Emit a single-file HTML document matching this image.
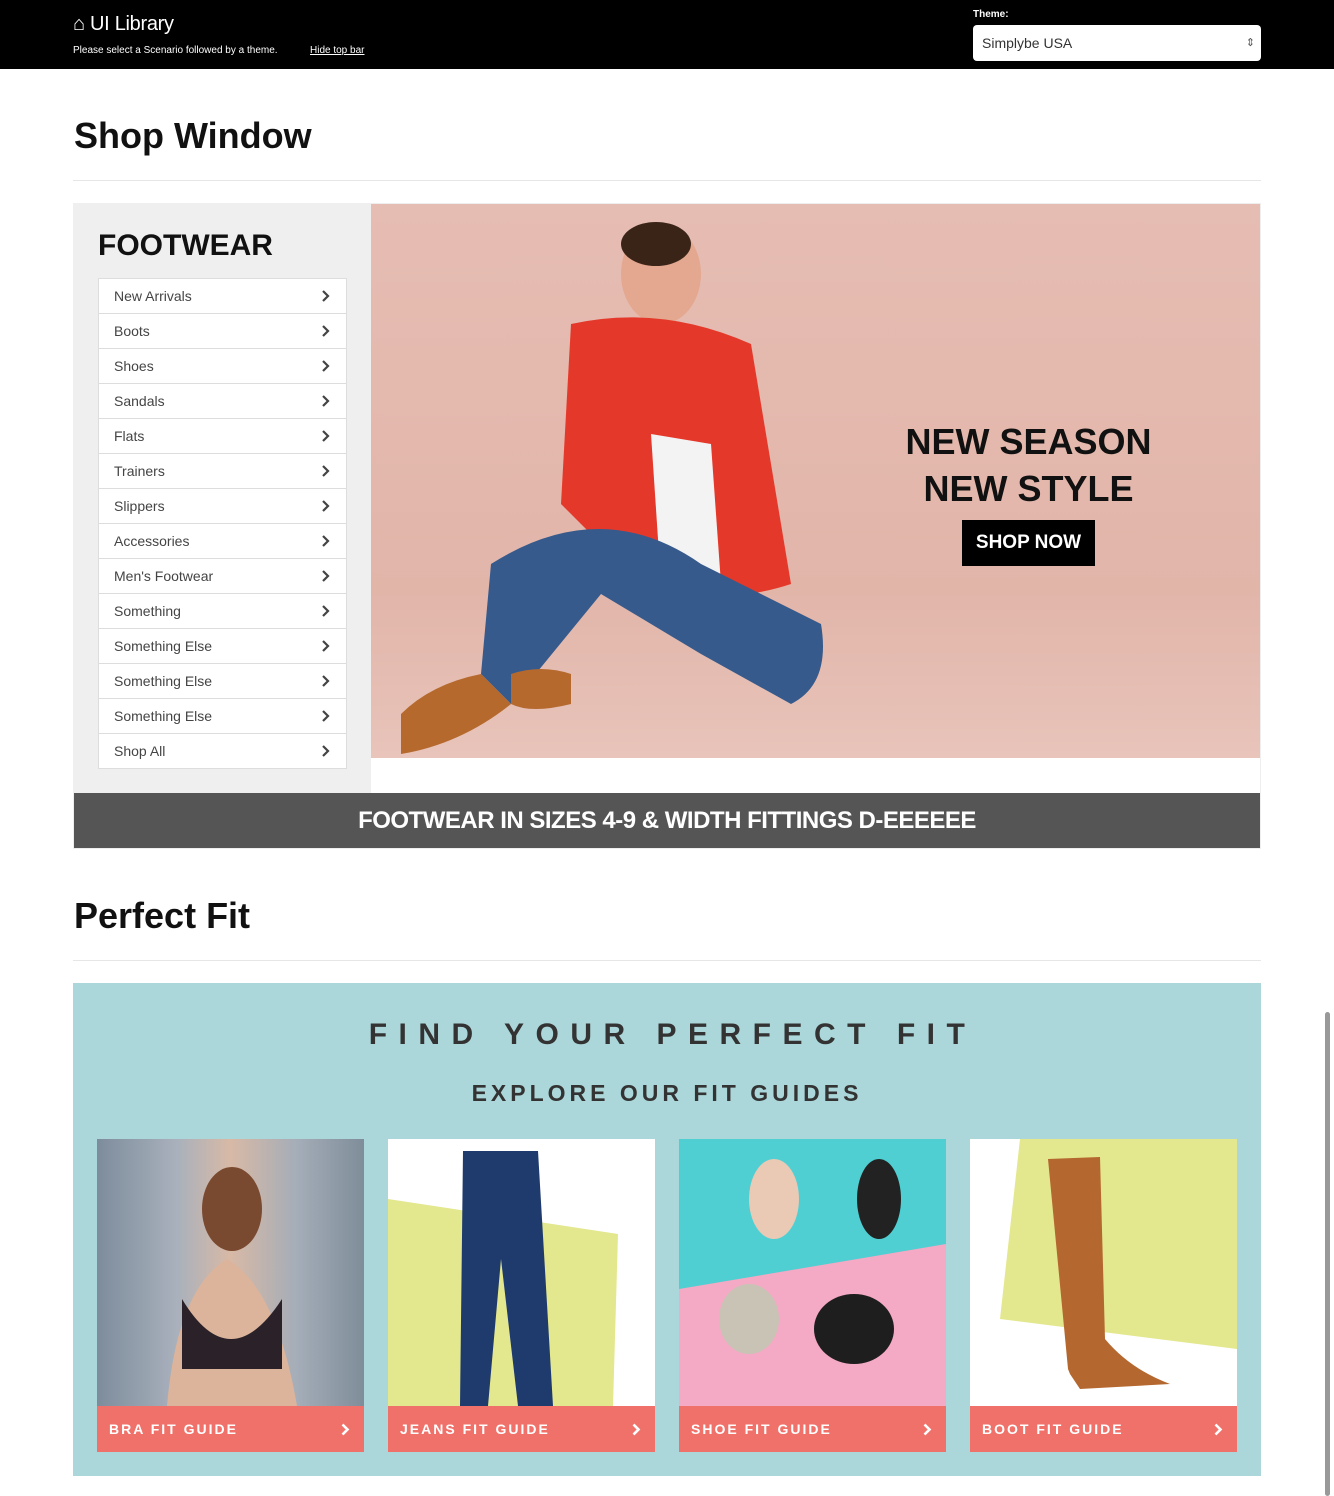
<!DOCTYPE html>
<html><head><meta charset="utf-8"><style>
*{box-sizing:border-box;margin:0;padding:0}
body{width:1334px;height:1496px;background:#fff;font-family:"Liberation Sans",Arial,sans-serif;position:relative;overflow:hidden}
.top{position:absolute;left:0;top:0;width:1334px;height:69px;background:#000;color:#fff}
.abs{position:absolute}
h1{position:absolute;left:74px;font-size:36px;font-weight:bold;color:#111}
.hr{position:absolute;left:73px;width:1188px;height:1px;background:#e6e6e6}
.menu{position:absolute;left:98px;top:278px;width:249px;border:1px solid #ddd;background:#fff}
.menu div{height:35px;border-top:1px solid #ddd;padding-left:15px;line-height:34px;font-size:14px;color:#444;position:relative}
.menu div:first-child{border-top:none;height:34px}
.menu div svg{position:absolute;right:16px;top:11px}
.card{position:absolute;top:1139px;width:267px;height:313px}
.card .img{height:267px}
.card .btn{height:46px;background:#f0716a;color:#fff;font-weight:bold;font-size:14px;letter-spacing:2px;line-height:46px;padding-left:12px;position:relative}
.card .btn svg{position:absolute;right:14px;top:17px}
</style></head><body>
<div class="top">
<div class="abs" style="left:73px;top:13px;font-size:20px;font-weight:500;letter-spacing:-0.3px">&#8962; UI Library</div>
<div class="abs" style="left:73px;top:45px;font-size:10px;">Please select a Scenario followed by a theme.</div>
<div class="abs" style="left:310px;top:45px;font-size:10px;text-decoration:underline">Hide top bar</div>
<div class="abs" style="left:973px;top:9px;font-size:10px;font-weight:bold">Theme:</div>
<div class="abs" style="left:973px;top:25px;width:288px;height:36px;background:#fff;border-radius:4px;color:#333;font-size:14px;line-height:36px;padding-left:9px">Simplybe USA<span style="position:absolute;right:6px;top:0;font-size:11px;color:#555">&#8661;</span></div>
</div>
<h1 style="top:115px">Shop Window</h1>
<div class="hr" style="top:180px"></div>
<div class="abs" style="left:73px;top:203px;width:1188px;height:646px;border:1px solid #eee;background:#fff"></div>
<div class="abs" style="left:73px;top:203px;width:298px;height:590px;background:#efefef"></div>
<div class="abs" style="left:98px;top:229px;font-size:30px;font-weight:bold;color:#111">FOOTWEAR</div>
<div class="menu">
<div>New Arrivals<svg width="8" height="12"><path d="M1 1l5 5-5 5" stroke="#444" stroke-width="2.2" fill="none"/></svg></div>
<div>Boots<svg width="8" height="12"><path d="M1 1l5 5-5 5" stroke="#444" stroke-width="2.2" fill="none"/></svg></div>
<div>Shoes<svg width="8" height="12"><path d="M1 1l5 5-5 5" stroke="#444" stroke-width="2.2" fill="none"/></svg></div>
<div>Sandals<svg width="8" height="12"><path d="M1 1l5 5-5 5" stroke="#444" stroke-width="2.2" fill="none"/></svg></div>
<div>Flats<svg width="8" height="12"><path d="M1 1l5 5-5 5" stroke="#444" stroke-width="2.2" fill="none"/></svg></div>
<div>Trainers<svg width="8" height="12"><path d="M1 1l5 5-5 5" stroke="#444" stroke-width="2.2" fill="none"/></svg></div>
<div>Slippers<svg width="8" height="12"><path d="M1 1l5 5-5 5" stroke="#444" stroke-width="2.2" fill="none"/></svg></div>
<div>Accessories<svg width="8" height="12"><path d="M1 1l5 5-5 5" stroke="#444" stroke-width="2.2" fill="none"/></svg></div>
<div>Men's Footwear<svg width="8" height="12"><path d="M1 1l5 5-5 5" stroke="#444" stroke-width="2.2" fill="none"/></svg></div>
<div>Something<svg width="8" height="12"><path d="M1 1l5 5-5 5" stroke="#444" stroke-width="2.2" fill="none"/></svg></div>
<div>Something Else<svg width="8" height="12"><path d="M1 1l5 5-5 5" stroke="#444" stroke-width="2.2" fill="none"/></svg></div>
<div>Something Else<svg width="8" height="12"><path d="M1 1l5 5-5 5" stroke="#444" stroke-width="2.2" fill="none"/></svg></div>
<div>Something Else<svg width="8" height="12"><path d="M1 1l5 5-5 5" stroke="#444" stroke-width="2.2" fill="none"/></svg></div>
<div>Shop All<svg width="8" height="12"><path d="M1 1l5 5-5 5" stroke="#444" stroke-width="2.2" fill="none"/></svg></div>
</div>
<div class="abs" style="left:371px;top:204px;width:889px;height:554px;background:linear-gradient(180deg,#e6bdb3 0%,#e2b5a9 70%,#e8c4ba 100%);overflow:hidden">
<svg width="889" height="554" style="position:absolute;left:0;top:0">
<ellipse cx="290" cy="70" rx="40" ry="50" fill="#e3a88f"/>
<ellipse cx="285" cy="40" rx="35" ry="22" fill="#3a2418"/>
<path d="M200 120 Q290 100 380 140 L420 380 Q360 400 280 390 L190 300 Z" fill="#e4392a"/>
<path d="M280 230 L340 240 L350 380 L290 380 Z" fill="#f3f3f3"/>
<path d="M120 360 Q230 290 330 360 L450 420 Q460 480 420 500 L330 450 L230 390 L140 500 L110 470 Z" fill="#365a8c"/>
<path d="M30 510 Q60 480 110 470 L140 500 Q90 540 30 550 Z" fill="#b5692d"/>
<path d="M140 470 Q170 460 200 470 L200 500 Q160 510 140 500 Z" fill="#b5692d"/>
</svg>
<div class="abs" style="left:500px;top:214px;width:315px;text-align:center;font-size:36px;font-weight:bold;color:#111;line-height:47px">NEW SEASON<br>NEW STYLE</div>
<div class="abs" style="left:591px;top:316px;width:133px;height:46px;background:#000;color:#fff;font-size:19px;font-weight:bold;line-height:46px;text-align:center">SHOP NOW</div>
</div>
<div class="abs" style="left:74px;top:793px;width:1186px;height:55px;background:#555;color:#fff;font-size:24px;font-weight:bold;text-align:center;line-height:55px;letter-spacing:-0.5px">FOOTWEAR IN SIZES 4-9 &amp; WIDTH FITTINGS D-EEEEEE</div>
<h1 style="top:895px">Perfect Fit</h1>
<div class="hr" style="top:960px"></div>
<div class="abs" style="left:73px;top:983px;width:1188px;height:493px;background:#acd7da"></div>
<div class="abs" style="left:73px;top:1018px;width:1188px;text-align:center;font-size:30px;font-weight:bold;color:#333;letter-spacing:11.5px;padding-left:11px">FIND YOUR PERFECT FIT</div>
<div class="abs" style="left:73px;top:1080px;width:1188px;text-align:center;font-size:23px;font-weight:bold;color:#333;letter-spacing:4px">EXPLORE OUR FIT GUIDES</div>
<div class="card" style="left:97px"><div class="img" style="background:linear-gradient(90deg,#7d8c9c,#a9b1bc 30%,#d8b9a6 50%,#a4adb8 75%,#7f8d9a)"><svg width="267" height="267"><path d="M70 267 Q80 150 130 120 Q180 150 200 267Z" fill="#dcb49c"/><path d="M85 160 Q133 240 185 160 L185 230 L85 230Z" fill="#2a2228"/><ellipse cx="135" cy="70" rx="30" ry="42" fill="#7a4a30"/></svg></div><div class="btn">BRA FIT GUIDE<svg width="9" height="13"><path d="M1.5 1.5l5 5-5 5" stroke="#fff" stroke-width="2.6" fill="none"/></svg></div></div>
<div class="card" style="left:388px"><div class="img" style="background:#fff;position:relative;overflow:hidden"><svg width="267" height="267"><path d="M0 60 L230 95 L225 267 L0 267Z" fill="#e3e78e"/><path d="M75 12 L150 12 L165 267 L130 267 L113 120 L100 267 L72 267 Z" fill="#1f3b6e"/></svg></div><div class="btn">JEANS FIT GUIDE<svg width="9" height="13"><path d="M1.5 1.5l5 5-5 5" stroke="#fff" stroke-width="2.6" fill="none"/></svg></div></div>
<div class="card" style="left:679px"><div class="img" style="background:#f4a9c4;position:relative;overflow:hidden"><svg width="267" height="267"><path d="M0 0 L267 0 L267 105 L0 150Z" fill="#4fcfd2"/><ellipse cx="95" cy="60" rx="25" ry="40" fill="#eac9b5"/><ellipse cx="200" cy="60" rx="22" ry="40" fill="#222"/><ellipse cx="70" cy="180" rx="30" ry="35" fill="#c9c3b6"/><ellipse cx="175" cy="190" rx="40" ry="35" fill="#1e1e1e"/></svg></div><div class="btn">SHOE FIT GUIDE<svg width="9" height="13"><path d="M1.5 1.5l5 5-5 5" stroke="#fff" stroke-width="2.6" fill="none"/></svg></div></div>
<div class="card" style="left:970px"><div class="img" style="background:#fff;position:relative;overflow:hidden"><svg width="267" height="267"><path d="M50 0 L267 0 L267 210 L30 180Z" fill="#e3e78e"/><path d="M78 20 L130 18 L135 200 Q160 230 200 245 L110 250 L100 235 L98 230 Z" fill="#b4672e"/></svg></div><div class="btn">BOOT FIT GUIDE<svg width="9" height="13"><path d="M1.5 1.5l5 5-5 5" stroke="#fff" stroke-width="2.6" fill="none"/></svg></div></div>
<div class="abs" style="left:1325px;top:1012px;width:5px;height:484px;background:#999;border-radius:3px"></div>
</body></html>
